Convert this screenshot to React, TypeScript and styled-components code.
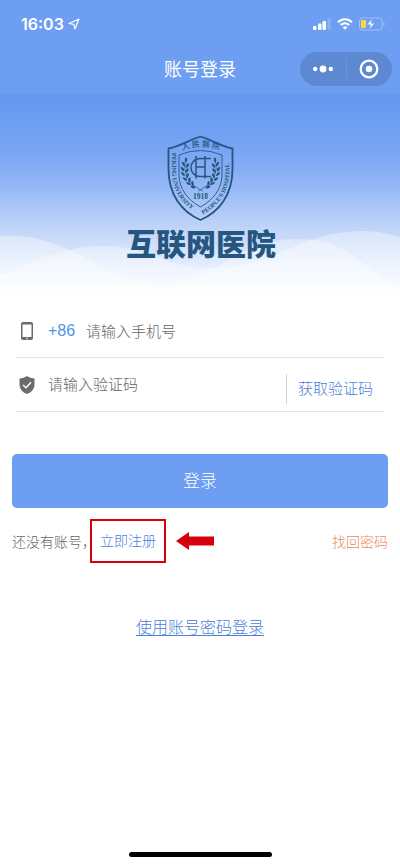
import React from "react";
import styled, { createGlobalStyle } from "styled-components";

const Global = createGlobalStyle`
  * { box-sizing: border-box; }
  body {
    margin: 0;
    background: #fff;
    font-family: "Noto Sans CJK SC", sans-serif;
    font-weight: 300;
  }
  button, input { font: inherit; }
`;

const Page = styled.div`
  min-height: 100vh;
  display: flex;
  flex-direction: column;
`;

const Header = styled.header`
  background: #6e9ef2;
  color: #fff;
  padding-bottom: 8px;
`;

const StatusBar = styled.div`
  display: flex;
  justify-content: space-between;
  align-items: center;
  height: 48px;
  padding: 0 14px 0 21px;
`;

const Clock = styled.div`
  display: flex;
  align-items: center;
  gap: 4px;
  font: 600 16px/20px Inter, sans-serif;
`;

const StatusIcons = styled.div`
  display: flex;
  align-items: center;
  gap: 6px;
`;

const NavBar = styled.div`
  display: grid;
  grid-template-columns: 1fr auto 1fr;
  align-items: center;
  height: 38px;
  padding: 4px 8px 0;
`;

const NavTitle = styled.h1`
  grid-column: 2;
  margin: 0;
  padding-bottom: 2px;
  font-size: 18px;
  line-height: 24px;
  font-weight: 400;
`;

const Capsule = styled.div`
  justify-self: end;
  display: flex;
  align-items: center;
  width: 92px;
  height: 34px;
  border-radius: 17px;
  background: #5c89d1;
`;

const CapsuleButton = styled.button`
  flex: 1;
  height: 20px;
  padding: 0;
  border: 0;
  background: none;
  display: flex;
  align-items: center;
  justify-content: center;
  & + & { border-left: 1px solid #6b95d9; }
`;

const Hero = styled.section`
  position: relative;
  height: 206px;
  padding-top: 41px;
  display: flex;
  flex-direction: column;
  align-items: center;
  background: linear-gradient(
    #6497ee 0, #6fa0f3 36px, #7ba7f3 62px, #94b7f5 92px,
    #b2cbf8 120px, #cbdcf9 146px, #e2ecfc 170px, #fff 206px
  );
`;

const Waves = styled.svg`
  position: absolute;
  inset: 0;
  width: 100%;
  height: 100%;
`;

const Crest = styled.svg`
  position: relative;
  display: block;
`;

const Brand = styled.h2`
  position: relative;
  margin: 2px 0 0 2px;
  color: #245680;
  font-size: 30px;
  line-height: 36px;
  font-weight: 900;
`;

const Form = styled.form`
  display: flex;
  flex-direction: column;
  padding: 5px 12px 0;
`;

const Field = styled.div`
  display: flex;
  align-items: center;
  height: 53px;
  margin: 0 4px;
  padding: 0 11px 0 2px;
  border-bottom: 1px solid #e4e4e4;
  & + & { height: 54px; }
`;

const FieldLabel = styled.label`
  display: flex;
  flex: none;
  width: 30px;
`;

const Prefix = styled.span`
  flex: none;
  width: 38px;
  color: #4b97e8;
  font: 400 16px/20px "Liberation Sans", sans-serif;
`;

const TextInput = styled.input`
  flex: 1;
  min-width: 0;
  height: 32px;
  padding: 0 0 2px;
  border: 0;
  outline: 0;
  background: none;
  color: #555;
  font-size: 15px;
  &::placeholder { color: #666; opacity: 1; }
`;

const CodeButton = styled.button`
  align-self: flex-end;
  height: 30px;
  margin-bottom: 7px;
  padding: 0 0 2px 11px;
  border: 0;
  border-left: 1px solid #d5d5d5;
  background: none;
  color: #4a80d8;
  font-size: 15px;
  line-height: 28px;
`;

const LoginButton = styled.button`
  height: 54px;
  margin-top: 42px;
  padding: 0 0 3px;
  border: 0;
  border-radius: 5px;
  background: #6e9ef2;
  color: #fff;
  font-size: 17px;
`;

const LinkRow = styled.div`
  display: flex;
  align-items: center;
  margin: 11px 12px 0;
  color: #666;
  font-size: 14px;
  line-height: 20px;
`;

const Hint = styled.span`
  width: 78px;
  white-space: nowrap;
`;

const RegisterLink = styled.a`
  padding: 9px 8px 11px;
  margin-right: 10px;
  border: 2px solid #d6000a;
  color: #4a80d8;
  text-decoration: none;
`;

const RecoverLink = styled.a`
  margin-left: auto;
  color: #e88a5d;
  text-decoration: none;
`;

const PasswordLogin = styled.a`
  align-self: center;
  margin-top: 51px;
  color: #4a80d8;
  font-size: 16px;
  line-height: 24px;
  text-underline-offset: 2px;
`;

const HomeIndicator = styled.div`
  align-self: center;
  width: 143px;
  height: 5px;
  margin: auto 0 9px;
  border-radius: 3px;
  background: #000;
`;

const leaves = [
  [19, 25, 5], [16.5, 29, -30], [20.5, 30.500, 35], [15.5, 34, -35], [20, 35.500, 35],
  [16, 39, -45], [20.5, 40.500, 25], [18, 44, -55], [22.5, 45, 10],
  [21.5, 48.500, -65], [25.5, 48.500, -5], [26, 52, -75],
];

function Laurel() {
  return (
    <g>
      <path d="M18.500 26C16 38 21 49 36 56" fill="none" stroke="#245680" strokeWidth="0.700" />
      {leaves.map(([x, y, r]) => (
        <ellipse key={`${x}-${y}`} cx={x} cy={y} rx="1.200" ry="2.500" transform={`rotate(${r} ${x} ${y})`} />
      ))}
    </g>
  );
}

function CrestLogo() {
  return (
    <Crest width="67" height="87" viewBox="0 0 67 87" fill="#245680" role="img" aria-label="人民医院">
      <defs>
        <path id="crestTop" d="M14.500 15.500Q33.500 8.500 56 15.500" />
        <path id="crestLeft" d="M5 18V34C5 55 14 70 34 80" />
        <path id="crestRight" d="M36 79.500C54 69 62.500 55 62.500 34V15" />
      </defs>
      <path d="M1.500 13.500C14 11 22 5 33.500 1.500C45 5 53 11 65.500 13.500V34C65.500 60 52 77 33.500 85C15 77 1.500 60 1.500 34Z" fill="none" stroke="#245680" strokeWidth="1.800" />
      <path d="M12 20Q33.500 11 55 20V40C55 54 46 65 33.500 72C21 65 12 54 12 40Z" fill="none" stroke="#245680" strokeWidth="0.900" />
      <g fontFamily="Liberation Serif, serif" fontSize="6" fontWeight="700">
        <text><textPath href="#crestLeft">PEKING UNIVERSITY</textPath></text>
        <text><textPath href="#crestRight">PEOPLE'S HOSPITAL</textPath></text>
      </g>
      <text fontFamily="Noto Sans CJK TC, sans-serif" fontSize="8" fontWeight="500">
        <textPath href="#crestTop" startOffset="1">人 民 醫 院</textPath>
      </text>
      <path d="M44 23.500H33C21 24 21 41 33 41.500H44M29 21V43.500M38 21V43.500M29 32H38" fill="none" stroke="#245680" strokeWidth="1.500" />
      <Laurel />
      <g transform="translate(67 0) scale(-1 1)"><Laurel /></g>
      <text x="33.500" y="64" textAnchor="middle" fontFamily="Liberation Serif, serif" fontSize="7.500" fontWeight="700">1918</text>
    </Crest>
  );
}

export default function App() {
  return (
    <>
      <Global />
      <Page>
        <Header>
          <StatusBar>
            <Clock>
              16:03
              <svg width="12" height="12" viewBox="0 0 12 12" fill="none" stroke="#fff" strokeWidth="1.200" strokeLinejoin="round">
                <path d="M11 1L1 5.500L5.800 6.300L7 11Z" />
              </svg>
            </Clock>
            <StatusIcons>
              <svg width="19" height="12" viewBox="0 0 19 12" fill="#fff">
                <rect x="1" y="8" width="3.500" height="4" rx="1" />
                <rect x="6" y="5.500" width="3.500" height="6.500" rx="1" />
                <rect x="10.500" y="3" width="3.500" height="9" rx="1" />
                <rect x="15.500" width="3" height="12" rx="1" opacity="0.200" />
              </svg>
              <svg width="16" height="12" viewBox="0 0 16 12" fill="none" stroke="#fff" strokeWidth="2.100">
                <path d="M1 4.300C5 .3 11 .3 15 4.300M3.700 7.100C6.200 4.700 9.800 4.700 12.300 7.100" />
                <path d="M8 11.700L5.600 9.300Q8 7.200 10.400 9.300Z" fill="#fff" stroke="none" />
              </svg>
              <svg width="27" height="14" viewBox="0 0 27 14">
                <rect x="0.500" y="1" width="22.500" height="12" rx="3" fill="none" stroke="#fff" strokeOpacity="0.350" />
                <path d="M24.500 5Q27 7 24.500 9Z" fill="#fff" opacity="0.400" />
                <rect x="2" y="3" width="5" height="8" rx="1" fill="#fbd442" />
                <path d="M13 1.500L8 7.800H11.500L10.300 12.500L15.700 6.200H12.200Z" fill="#fff" stroke="#6e9ef2" strokeWidth="0.600" />
              </svg>
            </StatusIcons>
          </StatusBar>
          <NavBar>
            <NavTitle>账号登录</NavTitle>
            <Capsule>
              <CapsuleButton type="button" aria-label="更多">
                <svg width="20" height="8" viewBox="0 0 20 8" fill="#fff">
                  <circle cx="2.200" cy="4" r="2.200" /><circle cx="10" cy="4" r="3.400" /><circle cx="17.800" cy="4" r="2.200" />
                </svg>
              </CapsuleButton>
              <CapsuleButton type="button" aria-label="关闭">
                <svg width="20" height="20" viewBox="0 0 20 20">
                  <circle cx="10" cy="10" r="8.300" fill="none" stroke="#fff" strokeWidth="2.300" /><circle cx="10" cy="10" r="3.300" fill="#fff" />
                </svg>
              </CapsuleButton>
            </Capsule>
          </NavBar>
        </Header>

        <Hero>
          <Waves viewBox="0 0 400 206" preserveAspectRatio="none" fill="#fff" fillOpacity="0.360" aria-hidden="true">
            <path d="M0 142C75 138 95 188 165 188C218 188 235 145 297 145C350 145 360 174 400 193V206H0Z" />
            <path d="M0 181C30 168 65 152 105 152C145 152 165 174 210 174C275 174 300 137 362 137C378 137 390 140 400 143V206H0Z" />
          </Waves>
          <CrestLogo />
          <Brand>互联网医院</Brand>
        </Hero>

        <Form onSubmit={(e) => e.preventDefault()}>
          <Field>
            <FieldLabel htmlFor="phone" aria-label="手机号">
              <svg width="18" height="18" viewBox="0 0 18 18">
                <rect x="3" y="0" width="12" height="18" rx="2" fill="#6b6b6b" />
                <rect x="4.500" y="2.500" width="9" height="12.500" fill="#fff" />
                <circle cx="9" cy="16.500" r="0.800" fill="#fff" />
              </svg>
            </FieldLabel>
            <Prefix>+86</Prefix>
            <TextInput id="phone" type="tel" placeholder="请输入手机号" />
          </Field>
          <Field>
            <FieldLabel htmlFor="code" aria-label="验证码">
              <svg width="18" height="18" viewBox="0 0 18 18">
                <path d="M9 0C11 1.300 14 2.300 16.500 2.500V8C16.500 13 13.500 16.500 9 18C4.500 16.500 1.500 13 1.500 8V2.500C4 2.300 7 1.300 9 0Z" fill="#6b6b6b" />
                <path d="M5 9L8 11.700L13 6.300" fill="none" stroke="#fff" strokeWidth="1.500" />
              </svg>
            </FieldLabel>
            <TextInput id="code" inputMode="numeric" placeholder="请输入验证码" />
            <CodeButton type="button">获取验证码</CodeButton>
          </Field>
          <LoginButton type="submit">登录</LoginButton>
        </Form>

        <LinkRow>
          <Hint>还没有账号，</Hint>
          <RegisterLink href="#register">立即注册</RegisterLink>
          <svg width="38" height="18" viewBox="0 0 38 18" fill="#d6000a" aria-hidden="true">
            <path d="M0 9L13 0V4.500H38V13.500H13V18Z" />
          </svg>
          <RecoverLink href="#recover">找回密码</RecoverLink>
        </LinkRow>

        <PasswordLogin href="#password">使用账号密码登录</PasswordLogin>
        <HomeIndicator />
      </Page>
    </>
  );
}
